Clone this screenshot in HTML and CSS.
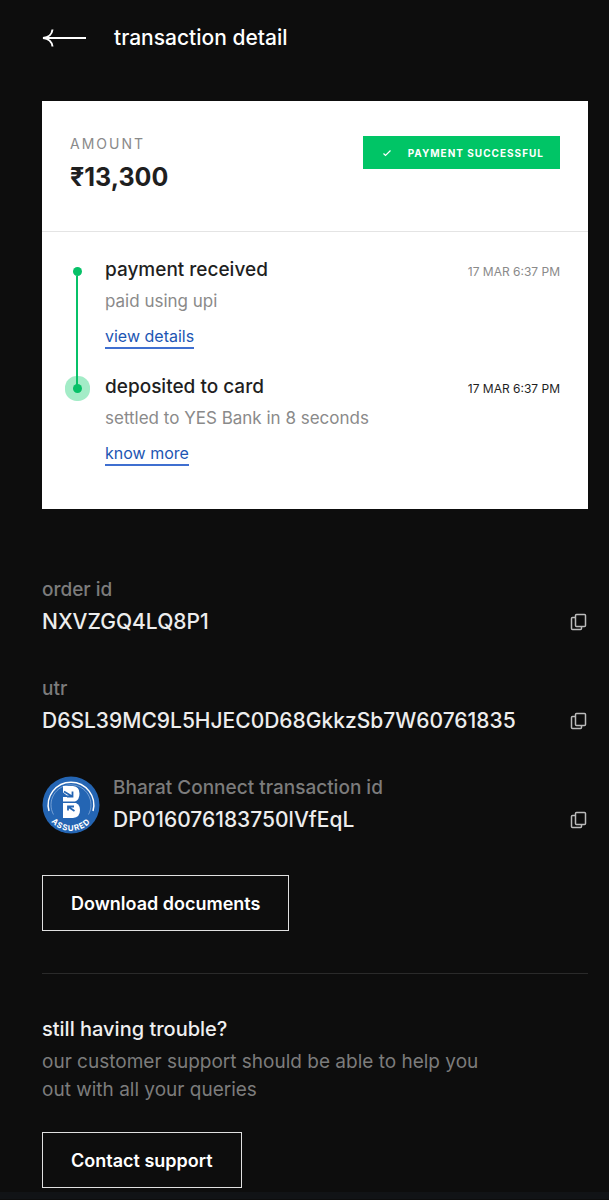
FILE: index.html
```html
<!DOCTYPE html>
<html lang="en">
<head>
    <meta charset="UTF-8">
    <meta name="viewport" content="width=device-width, initial-scale=1.0">
    <title>transaction detail</title>
    <link rel="stylesheet" href="styles.css">
</head>
<body>

<div class="page">
    <header class="header">
        <a href="#" class="back" aria-label="Back">
            <svg width="45" height="20" viewBox="0 0 45 20" fill="none" stroke="#fff" stroke-width="2">
                <path d="M1 10H44M10.500 1.500C10 6 6.500 9.500 1 10C6.500 10.500 10 14 10.500 18.500"/>
            </svg>
        </a>
        <h1>transaction detail</h1>
    </header>

    <section class="card">
        <div class="card-top">
            <div>
                <p class="amount-label">AMOUNT</p>
                <p class="amount">₹13,300</p>
            </div>
            <span class="status">
                <svg width="10" height="8" viewBox="0 0 10 8" fill="none" stroke="#fff" stroke-width="1.200">
                    <path d="M1.500 4.500L3.500 6.500L8.500 1.500"/>
                </svg>
                PAYMENT SUCCESSFUL
            </span>
        </div>

        <ol class="timeline">
            <li class="step">
                <div class="marker"><span class="dot"></span><span class="line"></span></div>
                <div class="step-text">
                    <h2>payment received</h2>
                    <p>paid using upi</p>
                    <a href="#">view details</a>
                </div>
                <time>17 MAR 6:37 PM</time>
            </li>
            <li class="step current">
                <div class="marker"><span class="dot"></span></div>
                <div class="step-text">
                    <h2>deposited to card</h2>
                    <p>settled to YES Bank in 8 seconds</p>
                    <a href="#">know more</a>
                </div>
                <time>17 MAR 6:37 PM</time>
            </li>
        </ol>
    </section>

    <section class="details">
        <div class="detail">
            <div class="detail-text">
                <p class="label">order id</p>
                <p class="value">NXVZGQ4LQ8P1</p>
            </div>
            <button class="copy" aria-label="Copy order id">
                <svg width="18" height="18" viewBox="0 0 18 18" fill="none" stroke="#bbb" stroke-width="1.500">
                    <rect x="5.500" y="1.500" width="10" height="12" rx="1"/>
                    <path d="M5.500 4.500H2.500A1 1 0 0 0 1.500 5.500V15.500A1 1 0 0 0 2.500 16.500H10.500A1 1 0 0 0 11.500 15.500V13.500"/>
                </svg>
            </button>
        </div>
        <div class="detail">
            <div class="detail-text">
                <p class="label">utr</p>
                <p class="value">D6SL39MC9L5HJEC0D68GkkzSb7W60761835</p>
            </div>
            <button class="copy" aria-label="Copy utr">
                <svg width="18" height="18" viewBox="0 0 18 18" fill="none" stroke="#bbb" stroke-width="1.500">
                    <rect x="5.500" y="1.500" width="10" height="12" rx="1"/>
                    <path d="M5.500 4.500H2.500A1 1 0 0 0 1.500 5.500V15.500A1 1 0 0 0 2.500 16.500H10.500A1 1 0 0 0 11.500 15.500V13.500"/>
                </svg>
            </button>
        </div>
        <div class="detail">
            <svg class="logo" width="58" height="58" viewBox="0 0 58 58">
                <circle cx="29" cy="29" r="28.500" fill="#2465b3"/>
                <path d="M7 35A22.800 22.800 0 1 1 51 35" fill="none" stroke="#fff" stroke-width="1.500"/>
                <path d="M11.500 38.500A20 20 0 1 1 46.500 38.500" fill="none" stroke="#a8c5e8" stroke-width="0.600"/>
                <path d="M21 10H31Q37.500 10.500 37.500 17.500Q37.500 24 33 25.500H21V21H27L21 16.500Z" fill="#fff"/>
                <path d="M21 27H34Q38 29 38 34Q38 41.500 31 42H21Z" fill="#fff"/>
                <path d="M22 15.500L29.500 20M30.500 15.500V20.500H25" fill="none" stroke="#2465b3" stroke-width="1.800"/>
                <path d="M26 34.500V30.500H32M26.500 31L32.500 35" fill="none" stroke="#2465b3" stroke-width="1.800"/>
                <path id="arc" d="M3.500 34A26 26 0 0 0 54.500 34" fill="none"/>
                <text class="logo-text"><textPath href="#arc" startOffset="50%" text-anchor="middle">ASSURED</textPath></text>
            </svg>
            <div class="detail-text">
                <p class="label">Bharat Connect transaction id</p>
                <p class="value">DP016076183750lVfEqL</p>
            </div>
            <button class="copy" aria-label="Copy transaction id">
                <svg width="18" height="18" viewBox="0 0 18 18" fill="none" stroke="#bbb" stroke-width="1.500">
                    <rect x="5.500" y="1.500" width="10" height="12" rx="1"/>
                    <path d="M5.500 4.500H2.500A1 1 0 0 0 1.500 5.500V15.500A1 1 0 0 0 2.500 16.500H10.500A1 1 0 0 0 11.500 15.500V13.500"/>
                </svg>
            </button>
        </div>
        <button class="btn">Download documents</button>
    </section>

    <section class="support">
        <h2>still having trouble?</h2>
        <p>our customer support should be able to help you out with all your queries</p>
        <button class="btn">Contact support</button>
    </section>
</div>
<footer class="bottom-bar"></footer>

</body>
</html>
```

FILE: styles.css
```css
* { box-sizing: border-box; margin: 0; padding: 0; }
body { background-color: #0d0d0d; color: #fff; font-family: Inter, "Noto Sans", sans-serif; font-size: 16px; }
h1, h2 { font-weight: 500; }
button { font-family: inherit; cursor: pointer; background: none; border: none; color: #fff; }
svg { display: block; }
.page { padding: 24px 21px 4px 42px; }

.header { display: flex; align-items: center; gap: 27px; margin-bottom: 49px; }
.header h1 { font-size: 21px; line-height: 28px; }

.card { background-color: #fff; color: #1f1f1f; }
.card-top { display: flex; justify-content: space-between; align-items: flex-start; padding: 35px 28px; border-bottom: 1px solid #e4e4e4; }
.amount-label { font-size: 14px; line-height: 16px; letter-spacing: 2px; margin-bottom: 6px; color: #8a8a8a; }
.amount { font-size: 25px; line-height: 38px; font-weight: 700; }
.status { display: flex; align-items: center; gap: 16px; height: 33px; padding: 0 16px 0 19px; background-color: #00c566; color: #fff; font-size: 10px; font-weight: 700; letter-spacing: 1px; }

.timeline { list-style: none; padding: 26px 28px 43px; }
.step { display: grid; grid-template-columns: 14px 1fr auto; gap: 21px; }
.step:first-child .step-text { padding-bottom: 26px; }
.marker { display: flex; flex-direction: column; align-items: center; padding-top: 9px; }
.dot { width: 9px; height: 9px; border-radius: 50%; background-color: #07c168; }
.line { position: relative; z-index: 1; flex: 1; width: 2px; margin-bottom: -10px; background-color: #07c168; }
.current .dot { box-shadow: 0 0 0 8px #a3ecc7; }
.step h2 { font-size: 19px; line-height: 24px; }
.step p { font-size: 17px; line-height: 24px; margin: 7px 0 12px; color: #8a8a8a; }
.step a { display: inline-block; font-size: 16px; line-height: 22px; color: #1d56b3; text-decoration: none; border-bottom: 2px solid #3f6fd0; vertical-align: top; }
.step time { font-size: 12px; line-height: 28px; color: #8a8a8a; }
.current time { color: #1f1f1f; }

.details { display: flex; flex-direction: column; align-items: flex-start; gap: 41px; padding: 69px 0 42px; border-bottom: 1px solid #2a2a2a; }
.detail { display: flex; align-items: flex-end; width: 100%; }
.logo { margin-right: 13px; }
.logo-text { fill: #fff; font-size: 8px; font-weight: 700; letter-spacing: 1px; }
.detail-text { flex: 1; }
.label { font-size: 19px; line-height: 24px; margin-bottom: 6px; font-weight: 500; color: #7c7c7c; }
.value { font-size: 21px; line-height: 28px; font-weight: 500; color: #ededed; }
.copy { padding: 5px 0; }

.btn { height: 56px; padding: 0 28px; border: 1px solid #e0e0e0; font-size: 18px; font-weight: 600; }

.support { padding-top: 41px; }
.support h2 { font-size: 20px; line-height: 28px; color: #f0f0f0; }
.support p { max-width: 450px; font-size: 19px; line-height: 28px; margin: 5px 0 28px; color: #7c7c7c; }
.bottom-bar { height: 7px; background-color: #111316; }
```
